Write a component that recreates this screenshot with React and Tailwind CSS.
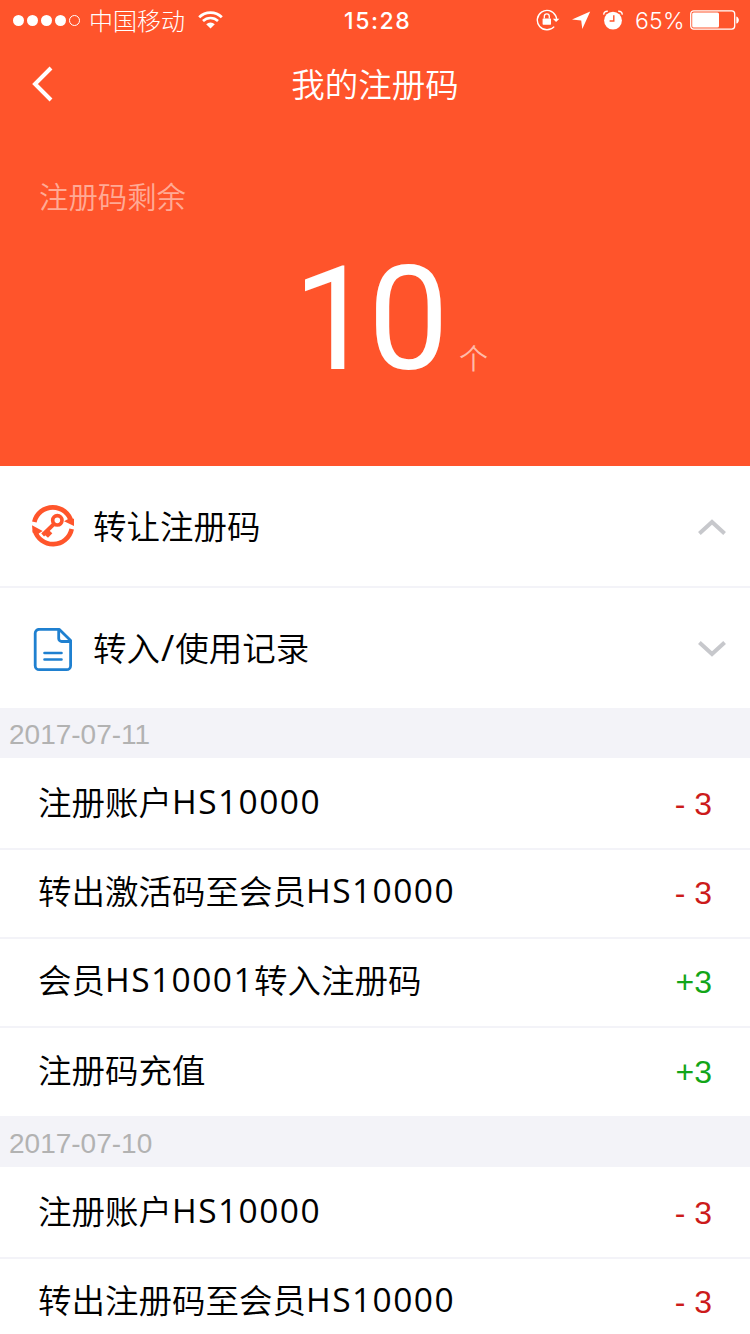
const CJK = "font-['Open_Sans','Noto_Sans_CJK_SC',sans-serif] font-[350]";

function StatusBar() {
  return (
    <div className="flex h-10 items-center text-white">
      <div className="ml-[13px] flex w-[68px] gap-[3px]">
        {[0, 1, 2, 3].map((i) => (
          <span key={i} className="h-[11px] w-[11px] shrink-0 rounded-full bg-white" />
        ))}
        <span className="h-[11px] w-[11px] shrink-0 rounded-full border border-white" />
      </div>
      <span className="ml-[8px] w-[98px] whitespace-nowrap font-['Noto_Sans_CJK_SC',sans-serif] text-[24px] leading-[40px] font-light">中国移动</span>
      <svg className="ml-[11px] shrink-0" width="25" height="18" viewBox="0 0 25 18" fill="none" stroke="#fff">
        <path d="M1.2 6.2a16 16 0 0 1 22.6 0" strokeWidth="2.8" />
        <path d="M5 10a10.7 10.7 0 0 1 15 0" strokeWidth="2.6" />
        <path d="M12.5 17.5 8.2 13.2a6.1 6.1 0 0 1 8.6 0z" fill="#fff" stroke="none" />
      </svg>
      <span className="mt-[2px] ml-[121px] w-[68px] whitespace-nowrap font-['Inter',sans-serif] text-[23px] leading-[40px] font-medium tracking-[1.6px]">15:28</span>
      <svg className="ml-[124px] shrink-0" width="25" height="22" viewBox="0 0 25 22" fill="none" stroke="#fff">
        <path d="M19.6 6.6A9.7 9.7 0 1 0 18.2 17.6M19.6 6.6a9.7 9.7 0 0 1 1 3.4" strokeWidth="1.4" />
        <path d="M16.8 9.7h6.6L20.1 13z" fill="#fff" stroke="none" />
        <rect x="6.6" y="9.4" width="8.4" height="6.3" rx=".6" fill="#fff" stroke="none" />
        <path d="M8.3 9.6V7.4a2.5 2.5 0 0 1 5 0v2.2" strokeWidth="1.3" />
      </svg>
      <svg className="ml-[11px] shrink-0" width="20" height="20" viewBox="0 0 20 20" fill="#fff">
        <path d="M18.2 1.6 10.3 19 9.2 10.4 0 9.6z" />
      </svg>
      <svg className="ml-[11px] shrink-0" width="20" height="20" viewBox="0 0 20 20" fill="none">
        <circle cx="10" cy="10.6" r="8.9" fill="#fff" />
        <path d="M10.8 5.3v5.7H6.6" stroke="#ff542b" strokeWidth="1.4" />
        <path d="M.8 4.6C.7 2.4 2.3 1 4.8 1.2M19.2 4.6c.1-2.2-1.5-3.6-4-3.4" stroke="#fff" strokeWidth="1.5" />
      </svg>
      <span className="mt-[2px] ml-[12px] w-[50px] whitespace-nowrap font-['Inter',sans-serif] text-[23px] leading-[40px] font-[350] tracking-[0.2px]">65%</span>
      <svg className="ml-[5px] shrink-0" width="50" height="20" viewBox="0 0 50 20" fill="none">
        <rect x=".7" y=".9" width="44" height="18.2" rx="3" stroke="#fff" strokeWidth="1.3" />
        <rect x="2.2" y="2.6" width="26.8" height="14.8" rx="1.5" fill="#fff" />
        <path d="M46.3 6.4c3.4 1 3.4 6.2 0 7.2z" fill="#fff" />
      </svg>
    </div>
  );
}

function KeyIcon() {
  return (
    <svg className="shrink-0" width="44" height="44" viewBox="9 12 132 132" fill="none" stroke="#ff552b">
      <path d="M19 66A57 57 0 0 1 130 66" strokeWidth="14" />
      <path d="M131 87A57 57 0 0 1 20 90" strokeWidth="14" />
      <path d="M108 64 138 78V56L122 56zM12 76 44 93 30 102 14 98z" fill="#ff552b" stroke="none" />
      <circle cx="88" cy="61" r="14" strokeWidth="11" />
      <path d="M79 71 44 105" strokeWidth="12" />
      <path d="M43 98 60 113 73 100 62 90z" fill="#ff552b" stroke="none" />
    </svg>
  );
}

function RecordIcon() {
  return (
    <svg className="mt-[3px] shrink-0" width="44" height="44" viewBox="0 0 44 44" fill="none" stroke="#1f80d0" strokeWidth="2.8">
      <path d="M8.2 1.4H28.4L39.6 12.5V37.7a4 4 0 0 1-4 4H8.2a4 4 0 0 1-4-4V5.3a4 4 0 0 1 4-4z" strokeLinejoin="round" />
      <path d="M27.7 1.5V10.5a3 3 0 0 0 3 3H39.5" />
      <path d="M13.5 25H30.5M13.5 31.5H30.5" strokeLinecap="round" strokeWidth="2.6" />
    </svg>
  );
}

function Label({ text, className }) {
  return (
    <span className={CJK + " whitespace-nowrap text-[33.5px] leading-[48px] text-black " + className}>
      {text.split(/([A-Z0-9/]+)/).map((part, i) =>
        i % 2 ? (
          <span key={i} className={part === "/" ? "mx-[1px] text-[36px] leading-none font-normal" : "relative top-[-1px] font-normal tracking-[1.45px]"}>{part}</span>
        ) : (
          part
        )
      )}
    </span>
  );
}

function MenuRow({ icon, label, open, className }) {
  return (
    <div className={"flex shrink-0 items-center bg-white pl-[31px] pr-[24px] " + className}>
      {icon}
      <Label text={label} className="ml-[18px] grow" />
      <svg className="mt-[2px]" width="28" height="16" viewBox="0 0 28 16" fill="none" stroke="#c7c8cc" strokeWidth="4">
        <path d={open ? "M1.4 14.5 14 3 26.6 14.5" : "M1.4 1.5 14 13 26.6 1.5"} />
      </svg>
    </div>
  );
}

function DateBar({ date, className }) {
  return (
    <div className={"flex shrink-0 items-center bg-[#f3f3f8] pl-[9px] font-['Liberation_Sans',sans-serif] text-[28px] leading-[40px] text-[#b2b2b2] " + className}>
      {date}
    </div>
  );
}

function Entry({ text, amount, className }) {
  const positive = amount.startsWith("+");
  return (
    <div className={"flex shrink-0 items-start justify-between border-[#f3f3f8] bg-white pl-[38px] pr-[38px] " + className}>
      <Label text={text} className="" />
      <span className={"mt-[2px] whitespace-pre font-['Liberation_Sans',sans-serif] text-[32px] leading-[48px] " + (positive ? "text-[#12a518]" : "text-[#cc1b1b]")}>{amount}</span>
    </div>
  );
}

export default function App() {
  return (
    <div className="flex h-[1334px] w-[750px] flex-col overflow-hidden bg-white">
      <header className="flex h-[466px] shrink-0 flex-col bg-[#ff542b]">
        <StatusBar />
        <div className="grid h-[88px] grid-cols-[100px_1fr_100px] items-center">
          <svg className="ml-[31px]" width="24" height="36" viewBox="0 0 24 36" fill="none" stroke="#fff" strokeWidth="4">
            <path d="M20 2 4 18 20 34" />
          </svg>
          <h1 className={CJK + " text-center text-[33.5px] leading-[48px] text-white"}>我的注册码</h1>
        </div>
        <p className={CJK + " mt-[48px] ml-[39px] text-[29.4px] leading-[42px] text-[#ffaa95]"}>注册码剩余</p>
        <div className="mt-[18px] ml-[293px] flex items-baseline">
          <span className="w-[164px] font-['Roboto',sans-serif] text-[144px] leading-[168px] tracking-[-6px] text-white">10</span>
          <span className={CJK + " relative top-[1px] ml-[2px] text-[29px] leading-[40px] text-[#ffbba9]"}>个</span>
        </div>
      </header>
      <MenuRow className="h-[122px] border-b-2 border-[#f3f3f8]" icon={<KeyIcon />} label="转让注册码" open />
      <MenuRow className="h-[120px]" icon={<RecordIcon />} label="转入/使用记录" />
      <DateBar className="h-[50px] pt-[3px]" date="2017-07-11" />
      <Entry className="h-[92px] border-b-2 pt-[20px]" text="注册账户HS10000" amount="- 3" />
      <Entry className="h-[89px] border-b-2 pt-[17px]" text="转出激活码至会员HS10000" amount="- 3" />
      <Entry className="h-[89px] border-b-2 pt-[17px]" text="会员HS10001转入注册码" amount="+3" />
      <Entry className="h-[88px] pt-[18px]" text="注册码充值" amount="+3" />
      <DateBar className="h-[51px] pt-[4px]" date="2017-07-10" />
      <Entry className="h-[92px] border-b-2 pt-[20px]" text="注册账户HS10000" amount="- 3" />
      <Entry className="h-[89px] border-b-2 pt-[17px]" text="转出注册码至会员HS10000" amount="- 3" />
    </div>
  );
}
